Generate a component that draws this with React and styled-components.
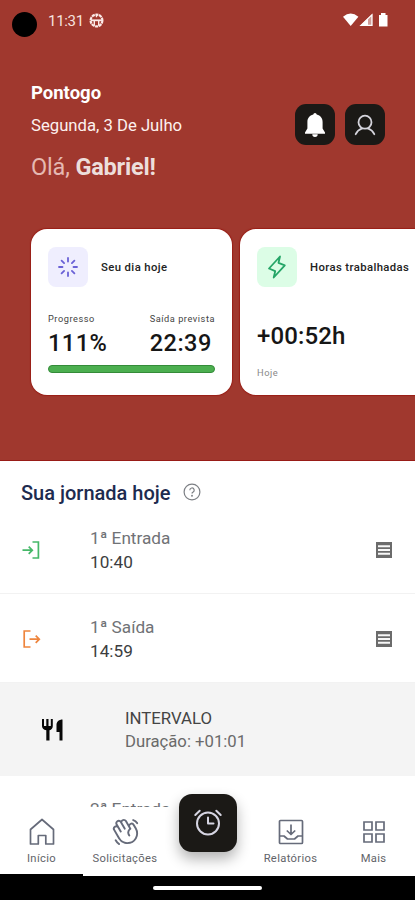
import styled, { createGlobalStyle } from "styled-components";
import { PiHandWaving } from "react-icons/pi";

const GlobalStyle = createGlobalStyle`
    * {
        box-sizing: border-box;
    }

    body {
        margin: 0;
        background: #fff;
        font-family: Roboto, "Liberation Sans", sans-serif;
        overflow: hidden;
    }

    svg {
        display: block;
        flex-shrink: 0;
    }
`;

const entries = [
    { id: 1, type: "in", label: "1ª Entrada", time: "10:40" },
    { id: 2, type: "out", label: "1ª Saída", time: "14:59" }
];

const GlobeIcon = () => (
    <svg width="15" height="15" viewBox="0 0 15 15" fill="none" stroke="#fbeae7">
        <circle cx="7.5" cy="7.5" r="5.9" strokeWidth="2.2" strokeDasharray="3.1 .6" />
        <path d="M2 7.300h11" strokeWidth="1.800" />
        <path d="M5.300 8v4.800M9.700 8v4.800M7.500 2v2.200" strokeWidth="1.400" />
    </svg>
);

const StatusIcons = () => (
    <svg width="48" height="16" viewBox="0 0 48 16">
        <path d="M0 4.800Q7.700-1.600 15.400 4.800L7.700 14z" fill="#fff" />
        <path d="M29.500 1.500v12.500H16.500z" fill="#fff" fillOpacity=".5" />
        <path d="M28.900 2.800v10.600H18z" fill="none" stroke="#fff" strokeWidth="1.200" />
        <path d="M25 6.500v7h-7z" fill="#fff" />
        <path d="M36 3h2V1h4.500v2h2v11.500H36z" fill="#fff" />
    </svg>
);

const BellIcon = () => (
    <svg width="22" height="26" viewBox="0 0 22 26" fill="#fff">
        <path d="M11 1c1 0 1.500.800 1.700 1.600C16.500 3.500 18.600 6.300 18.600 10v6.500l2.400 4v1.200H1v-1.200l2.400-4V10c0-3.700 2.100-6.500 5.900-7.400C9.500 1.800 10 1 11 1z" />
        <path d="M8.300 22.300h5.400a2.700 2.700 0 0 1-5.400 0z" />
    </svg>
);

const UserIcon = () => (
    <svg width="22" height="22" viewBox="0 0 22 22" fill="none" stroke="#d5d4dc" strokeWidth="1.800" strokeLinecap="round">
        <circle cx="11" cy="8.200" r="6.500" />
        <path d="M1.700 20.200c1.200-2.500 3.500-4.700 6-5.500M20.300 20.200c-1.200-2.500-3.500-4.700-6-5.500" />
    </svg>
);

const SpinnerIcon = () => (
    <svg width="22" height="22" viewBox="0 0 22 22" fill="none" stroke="currentColor" strokeWidth="1.800" strokeLinecap="round">
        <path d="M11 2v3.500M11 16.500V20M2 11h3.500M16.500 11H20M4.600 4.600l2.500 2.500M14.900 14.900l2.500 2.500M4.600 17.400l2.500-2.500M14.900 7.100l2.500-2.500" />
    </svg>
);

const BoltIcon = () => (
    <svg width="20" height="24" viewBox="0 0 20 24" fill="none" stroke="currentColor" strokeWidth="1.800" strokeLinejoin="round">
        <path d="M13 1.500 2 13.500l6.200 2.700-1.500 6.300L17.800 10.300l-6.300-2.500z" />
    </svg>
);

const HelpIcon = () => (
    <svg width="18" height="18" viewBox="0 0 18 18" fill="none" stroke="#7c7f84" strokeWidth="1.200">
        <circle cx="9" cy="9" r="7.900" />
        <path d="M6.800 7.200a2.200 2.200 0 1 1 3.300 1.900c-.800.400-1.100.800-1.100 1.500" />
        <circle cx="9" cy="12.700" r=".400" />
    </svg>
);

const EnterIcon = () => (
    <svg width="18" height="18" viewBox="0 0 18 18" fill="none" stroke="#46b869" strokeWidth="1.700">
        <path d="M10.500 1h5.900v16h-5.900M.5 9.200h9.800M6.700 5.600l3.600 3.600-3.600 3.600" />
    </svg>
);

const LeaveIcon = () => (
    <svg width="19" height="18" viewBox="0 0 19 18" fill="none" stroke="#ee853d" strokeWidth="1.700">
        <path d="M8.500 1H2.200v16h6.300M7.500 9.200h9.800M13.700 5.600l3.600 3.600-3.600 3.600" />
    </svg>
);

const ReceiptIcon = () => (
    <svg width="16" height="16" viewBox="0 0 16 16">
        <path d="M0 0h16v16H0z" fill="#6b6b6b" />
        <path d="M2 3.200h12v2H2zM2 7h12v2H2zM2 10.800h12v2H2z" fill="#f7f7f7" />
    </svg>
);

const MealIcon = () => (
    <svg width="22" height="22" viewBox="0 0 22 22" fill="#080808">
        <path d="M0 0h2v7h2.300V0h2.200v7h2.300V0h2v7c0 2.400-1.300 3.800-3.300 4.200V21.500H4.300V11.200C1.500 10.800 0 9.400 0 7z" />
        <path d="M20.500.5v21h-3v-8.500h-3V6c0-3.300 2.500-5.500 6-5.500z" />
    </svg>
);

const HomeIcon = () => (
    <svg width="26" height="28" viewBox="0 0 26 28" fill="none" stroke="#666b7a" strokeWidth="1.700" strokeLinejoin="round">
        <path d="M1.500 26V11.500L13 1.500l11.500 10V26h-7.700v-8.500H9.300V26z" />
    </svg>
);

const InboxIcon = () => (
    <svg width="26" height="26" viewBox="0 0 26 26" fill="none" stroke="#666b7a" strokeWidth="1.700" strokeLinejoin="round">
        <rect x="1.500" y="1.500" width="23" height="23" rx="1" />
        <path d="M1.500 17H6l3.500 3h7l3.500-3h4.500M13 5.500v10M8.800 11.500l4.200 4 4.200-4" />
    </svg>
);

const GridIcon = () => (
    <svg width="22" height="22" viewBox="0 0 22 22" fill="none" stroke="#666b7a" strokeWidth="1.700">
        <path d="M1 1h8v8H1zM13 1h8v8h-8zM1 13h8v8H1zM13 13h8v8h-8z" />
    </svg>
);

const AlarmIcon = () => (
    <svg width="30" height="28" viewBox="0 0 30 28" fill="none" stroke="currentColor" strokeWidth="2" strokeLinecap="round" strokeLinejoin="round">
        <circle cx="15" cy="14.500" r="11" />
        <path d="M15 8.500v6h5.500M2.300 6l4.400-4.300M27.700 6l-4.400-4.300" />
    </svg>
);

const navItems = [
    { label: "Início", icon: <HomeIcon />, width: 83 },
    { label: "Solicitações", icon: <PiHandWaving size={31} />, width: 84 },
    { label: "", icon: null, width: 82 },
    { label: "Relatórios", icon: <InboxIcon />, width: 83 },
    { label: "Mais", icon: <GridIcon />, width: 83 }
];

export default function App() {
    return (
        <>
            <GlobalStyle />
            <Phone>
                <Hero>
                    <StatusBar>
                        <Camera />
                        <Clock>11:31</Clock>
                        <GlobeIcon />
                        <Spacer />
                        <StatusIcons />
                    </StatusBar>

                    <Welcome>
                        <div>
                            <Company>Pontogo</Company>
                            <Today>Segunda, 3 De Julho</Today>
                            <Greeting>Olá, <strong>Gabriel!</strong></Greeting>
                        </div>
                        <Actions>
                            <DarkButton aria-label="Notificações"><BellIcon /></DarkButton>
                            <DarkButton aria-label="Perfil"><UserIcon /></DarkButton>
                        </Actions>
                    </Welcome>

                    <Cards>
                        <Card>
                            <CardHeader>
                                <IconTile $bg="#efeefe" $color="#6a61d6"><SpinnerIcon /></IconTile>
                                <CardTitle>Seu dia hoje</CardTitle>
                            </CardHeader>
                            <Stats>
                                <Stat $width={102}>
                                    <StatLabel>Progresso</StatLabel>
                                    <StatValue>111%</StatValue>
                                </Stat>
                                <Stat>
                                    <StatLabel>Saída prevista</StatLabel>
                                    <StatValue>22:39</StatValue>
                                </Stat>
                            </Stats>
                            <Progress />
                        </Card>

                        <Card>
                            <CardHeader>
                                <IconTile $bg="#dcfde6" $color="#25a567"><BoltIcon /></IconTile>
                                <CardTitle>Horas trabalhadas</CardTitle>
                            </CardHeader>
                            <Balance>+00:52h</Balance>
                            <BalanceLabel>Hoje</BalanceLabel>
                        </Card>
                    </Cards>
                </Hero>

                <Journey>
                    <JourneyTitle>
                        <h2>Sua jornada hoje</h2>
                        <HelpIcon />
                    </JourneyTitle>

                    {entries.map((entry) => (
                        <Entry key={entry.id}>
                            <EntryIcon>{entry.type === "in" ? <EnterIcon /> : <LeaveIcon />}</EntryIcon>
                            <EntryText>
                                <EntryLabel>{entry.label}</EntryLabel>
                                <EntryTime>{entry.time}</EntryTime>
                            </EntryText>
                            <ReceiptIcon />
                        </Entry>
                    ))}

                    <Break>
                        <MealIcon />
                        <div>
                            <BreakTitle>INTERVALO</BreakTitle>
                            <BreakDuration>Duração: +01:01</BreakDuration>
                        </div>
                    </Break>

                    <NextEntry>
                        <EntryLabel>2ª Entrada</EntryLabel>
                    </NextEntry>
                </Journey>

                <BottomNav>
                    {navItems.map((item, i) => (
                        <NavItem key={i} $width={item.width}>
                            <NavIcon>{item.icon}</NavIcon>
                            <NavLabel>{item.label}</NavLabel>
                        </NavItem>
                    ))}
                    <ClockButton aria-label="Registrar ponto"><AlarmIcon /></ClockButton>
                </BottomNav>
                <NavIndicator />

                <SystemBar>
                    <HomeHandle />
                </SystemBar>
            </Phone>
        </>
    );
}

const Phone = styled.div`
    display: flex;
    flex-direction: column;
    width: 415px;
    height: 900px;
    overflow: hidden;
    background: #fff;
    white-space: nowrap;
`;

const Hero = styled.header`
    flex: none;
    height: 461px;
    background: #a0382e;
    border-bottom: 1px solid #981c17;
    overflow: hidden;
`;

const StatusBar = styled.div`
    display: flex;
    align-items: center;
    height: 40px;
    padding: 0 24px 0 12px;
`;

const Camera = styled.div`
    width: 25px;
    height: 25px;
    margin-top: 8px;
    border-radius: 50%;
    background: #000;
`;

const Clock = styled.span`
    width: 41px;
    margin-left: 11px;
    margin-top: 1px;
    color: #f7e2de;
    font-size: 15px;
    letter-spacing: -0.3px;
`;

const Spacer = styled.div`
    flex: 1;
`;

const Welcome = styled.div`
    display: flex;
    justify-content: space-between;
    height: 189px;
    padding: 40px 30px 0 31px;
    color: #fff;
`;

const Company = styled.div`
    font-size: 18.500px;
    font-weight: 700;
    line-height: 26px;
`;

const Today = styled.div`
    margin-top: 7px;
    color: #fdf1ef;
    font-size: 16.700px;
    line-height: 26px;
`;

const Greeting = styled.div`
    margin-top: 12px;
    color: #e5b9b2;
    font-size: 23.500px;
    line-height: 32px;
    font-weight: 400;
    letter-spacing: -0.15px;

    strong {
        color: #eddedb;
        font-weight: 700;
        letter-spacing: -0.2px;
    }
`;

const Actions = styled.div`
    display: flex;
    gap: 10px;
    padding-top: 24px;
`;

const DarkButton = styled.button`
    display: flex;
    align-items: center;
    justify-content: center;
    width: 40px;
    height: 41px;
    padding: 0;
    border: 0;
    border-radius: 11px;
    background: #1b1916;
`;

const Cards = styled.div`
    display: flex;
    gap: 8px;
    padding-left: 31px;
`;

const Card = styled.article`
    flex: none;
    width: 201px;
    height: 166px;
    padding: 18px 17px;
    border-radius: 16px;
    background: #fff;
    box-shadow: 0 0 1px 1px #991f17;
`;

const CardHeader = styled.div`
    display: flex;
    align-items: center;
    gap: 12px;
`;

const IconTile = styled.div`
    display: flex;
    flex: none;
    align-items: center;
    justify-content: center;
    width: 40px;
    height: 40px;
    border-radius: 8px;
    background: ${({ $bg }) => $bg};
    color: ${({ $color }) => $color};
`;

const CardTitle = styled.h3`
    margin: 0;
    padding-left: 1px;
    color: #222;
    font-size: 11.300px;
    font-weight: 500;
    letter-spacing: 0.4px;
`;

const Stats = styled.div`
    display: flex;
    margin-top: 25px;
`;

const Stat = styled.div`
    width: ${({ $width }) => ($width ? `${$width}px` : "auto")};
`;

const StatLabel = styled.div`
    color: #444;
    font-size: 9.200px;
    line-height: 13px;
    letter-spacing: 0.55px;
`;

const StatValue = styled.div`
    margin-top: 3px;
    color: #161616;
    font-size: 23.500px;
    font-weight: 500;
    line-height: 30px;
    letter-spacing: 0.5px;
`;

const Progress = styled.div`
    height: 8px;
    margin-top: 7px;
    border: 1px solid #348b39;
    border-radius: 4px;
    background: #4caf50;
`;

const Balance = styled.div`
    margin-top: 34px;
    color: #161616;
    font-size: 24px;
    font-weight: 500;
    line-height: 30px;
    letter-spacing: 0.15px;
`;

const BalanceLabel = styled.div`
    margin-top: 15px;
    color: #888;
    font-size: 9.300px;
    line-height: 13px;
    letter-spacing: 0.5px;
`;

const Journey = styled.main`
    flex: none;
    height: 346px;
    overflow: hidden;
    background: #fff;
`;

const JourneyTitle = styled.div`
    display: flex;
    align-items: center;
    gap: 12px;
    height: 44px;
    padding: 18px 0 0 21px;

    h2 {
        margin: 0;
        padding-top: 1px;
        color: #1d2b4f;
        font-size: 20px;
        font-weight: 500;
        line-height: 26px;
    }
`;

const Entry = styled.div`
    display: flex;
    align-items: center;
    height: 89px;
    padding: 1px 23px 0 22px;
    border-bottom: 1px solid #f2f2f2;
`;

const EntryIcon = styled.div`
    width: 68px;
    padding-top: 1px;
`;

const EntryText = styled.div`
    flex: 1;
`;

const EntryLabel = styled.div`
    color: #707276;
    font-size: 17.200px;
    line-height: 24px;
`;

const EntryTime = styled.div`
    color: #3c3d40;
    font-size: 17.200px;
    line-height: 24px;
`;

const Break = styled.section`
    display: flex;
    align-items: center;
    gap: 61px;
    height: 93px;
    padding-left: 42px;
    background: #f4f4f4;
`;

const BreakTitle = styled.div`
    color: #444;
    font-size: 16.800px;
    line-height: 23px;
`;

const BreakDuration = styled.div`
    color: #6a6a6a;
    font-size: 16.700px;
    line-height: 23px;
`;

const NextEntry = styled.div`
    padding: 21px 0 0 90px;
`;

const BottomNav = styled.nav`
    position: relative;
    display: flex;
    flex: none;
    height: 69px;
    background: #fff;
`;

const NavItem = styled.div`
    display: flex;
    flex-direction: column;
    align-items: center;
    width: ${({ $width }) => $width}px;
    padding-top: 8px;
`;

const NavIcon = styled.div`
    display: flex;
    align-items: center;
    height: 33px;
    color: #666b7a;
`;

const NavLabel = styled.span`
    margin-top: 3px;
    color: #626469;
    font-size: 11.200px;
    line-height: 15px;
    letter-spacing: 0.35px;
`;

/* floats above the bar and over the end of the list */
const ClockButton = styled.button`
    position: absolute;
    top: -13px;
    left: 179px;
    display: flex;
    align-items: center;
    justify-content: center;
    width: 58px;
    height: 58px;
    padding: 0;
    border: 0;
    border-radius: 13px;
    background: #1b1916;
    color: #d6d5e2;
    box-shadow: 0 7px 14px rgba(0, 0, 0, 0.3);
`;

/* overlaps the bottom edge of the bar under the active item */
const NavIndicator = styled.div`
    flex: none;
    width: 83px;
    height: 2px;
    margin-top: -2px;
    background: #000;
    z-index: 1;
`;

const SystemBar = styled.footer`
    display: flex;
    flex: none;
    justify-content: center;
    height: 24px;
    padding-top: 10px;
    background: #000;
`;

const HomeHandle = styled.div`
    width: 109px;
    height: 4px;
    border-radius: 2px;
    background: #fff;
`;
